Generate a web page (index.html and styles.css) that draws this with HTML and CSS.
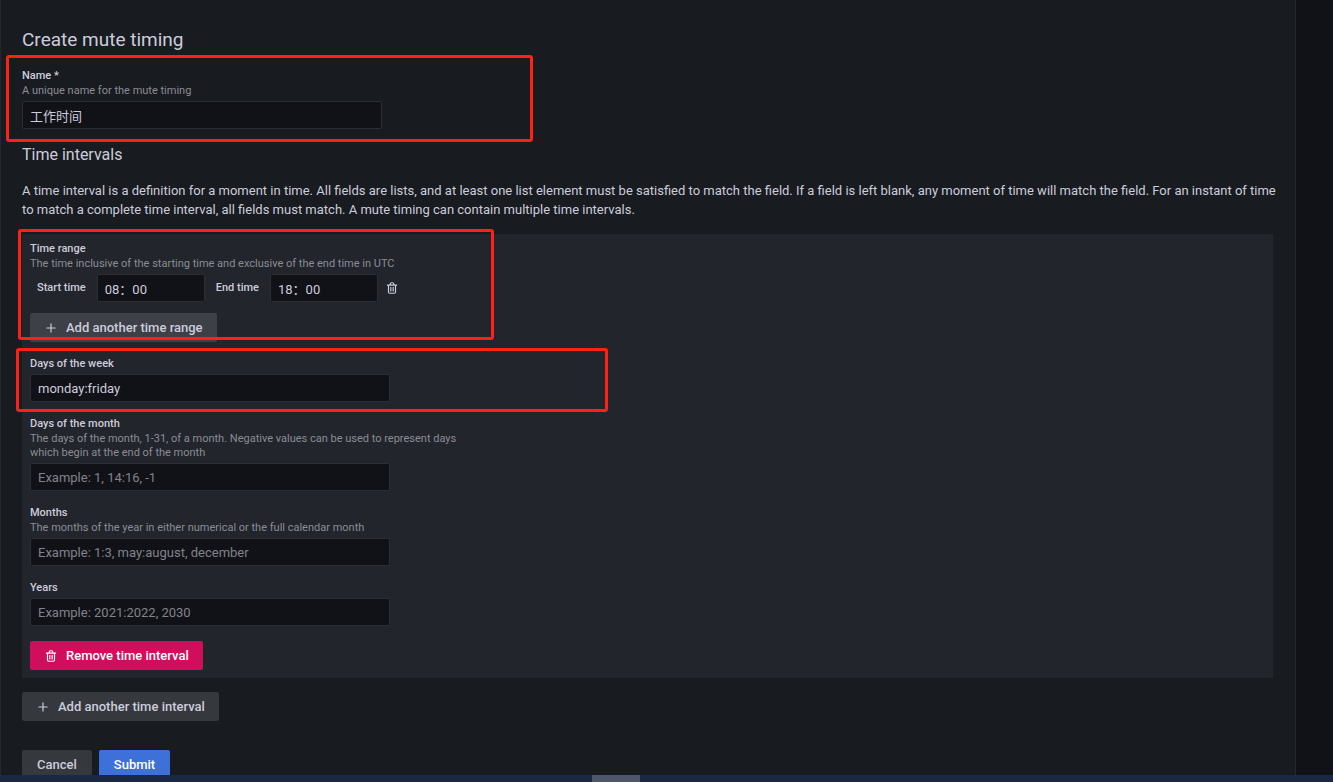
FILE: index.html
```html
<!DOCTYPE html>
<html lang="en">
<head>
  <meta charset="UTF-8" />
  <meta name="viewport" content="width=device-width, initial-scale=1.0"/>
  <title>Create mute timing</title>
  <link rel="stylesheet" href="styles.css">
</head>
<body>
  <svg class="sprite" aria-hidden="true">
    <symbol id="plus" viewBox="0 0 24 24">
      <path d="M19 11h-6V5a1 1 0 0 0-2 0v6H5a1 1 0 0 0 0 2h6v6a1 1 0 0 0 2 0v-6h6a1 1 0 0 0 0-2z"/>
    </symbol>
    <symbol id="trash" viewBox="0 0 24 24">
      <path d="M10 18a1 1 0 0 0 1-1v-6a1 1 0 0 0-2 0v6a1 1 0 0 0 1 1zM20 6h-4V5a3 3 0 0 0-3-3h-2a3 3 0 0 0-3 3v1H4a1 1 0 0 0 0 2h1v11a3 3 0 0 0 3 3h8a3 3 0 0 0 3-3V8h1a1 1 0 0 0 0-2zM10 5a1 1 0 0 1 1-1h2a1 1 0 0 1 1 1v1h-4zm7 14a1 1 0 0 1-1 1H8a1 1 0 0 1-1-1V8h10zm-3-1a1 1 0 0 0 1-1v-6a1 1 0 0 0-2 0v6a1 1 0 0 0 1 1z"/>
    </symbol>
  </svg>

  <main class="panel">
    <form>
      <h1>Create mute timing</h1>

      <div class="field marked mark-name">
        <label for="name">Name *</label>
        <p class="hint">A unique name for the mute timing</p>
        <input type="text" id="name" value="工作时间">
      </div>

      <h2>Time intervals</h2>
      <p class="intro">A time interval is a definition for a moment in time. All fields are lists, and at least one list element must be satisfied to match the field. If a field is left blank, any moment of time will match the field. For an instant of time to match a complete time interval, all fields must match. A mute timing can contain multiple time intervals.</p>

      <section class="interval">
        <div class="field marked mark-range">
          <h3>Time range</h3>
          <p class="hint">The time inclusive of the starting time and exclusive of the end time in UTC</p>
          <div class="time-row">
            <label for="start">Start time</label>
            <input type="text" id="start" value="08：00">
            <label for="end">End time</label>
            <input type="text" id="end" value="18：00">
            <button type="button" class="icon-button" aria-label="Remove time range">
              <svg><use href="#trash"/></svg>
            </button>
          </div>
          <button type="button" class="button secondary">
            <svg><use href="#plus"/></svg>Add another time range
          </button>
        </div>

        <div class="field marked mark-week">
          <label for="weekdays">Days of the week</label>
          <input type="text" id="weekdays" value="monday:friday">
        </div>

        <div class="field">
          <label for="days">Days of the month</label>
          <p class="hint">The days of the month, 1-31, of a month. Negative values can be used to represent days which begin at the end of the month</p>
          <input type="text" id="days" placeholder="Example: 1, 14:16, -1">
        </div>

        <div class="field">
          <label for="months">Months</label>
          <p class="hint">The months of the year in either numerical or the full calendar month</p>
          <input type="text" id="months" placeholder="Example: 1:3, may:august, december">
        </div>

        <div class="field">
          <label for="years">Years</label>
          <input type="text" id="years" placeholder="Example: 2021:2022, 2030">
        </div>

        <button type="button" class="button danger">
          <svg><use href="#trash"/></svg>Remove time interval
        </button>
      </section>

      <button type="button" class="button secondary">
        <svg><use href="#plus"/></svg>Add another time interval
      </button>

      <div class="actions">
        <button type="button" class="button secondary">Cancel</button>
        <button type="submit" class="button primary">Submit</button>
      </div>
    </form>
  </main>

  <div class="taskbar"><span></span></div>
</body>
</html>
```

FILE: styles.css
```css
*,
*::after {
  box-sizing: border-box;
}

body {
  margin: 0;
  height: 100vh;
  overflow: hidden;
  background: #111217;
  color: #ccccdc;
  font-family: Roboto, "Noto Sans CJK SC", sans-serif;
  font-size: 13px;
  line-height: 19px;
}

h1, h2, h3, p {
  margin: 0;
}

.sprite {
  display: none;
}

.panel {
  min-height: 100vh;
  margin-right: 37px;
  padding: 28px 22px 0 21px;
  background: #181b1f;
  border: solid #25272c;
  border-width: 0 1px;
}

h1 {
  margin-bottom: 17px;
  font-size: 19px;
  font-weight: 400;
  line-height: 24px;
}

h2 {
  margin: 16px 0;
  font-size: 16px;
  font-weight: 400;
  line-height: 20px;
}

.intro {
  margin: 0 -8px 15px 0;
}

.field {
  position: relative;
  display: flex;
  flex-direction: column;
  align-items: flex-start;
}

.field label,
h3 {
  font-size: 11px;
  font-weight: 500;
  line-height: 14px;
}

.hint {
  max-width: 440px;
  margin-top: 1px;
  color: #8b8c96;
  font-size: 11px;
  line-height: 14px;
}

input {
  width: 360px;
  height: 28px;
  margin-top: 3px;
  padding: 0 7px;
  background: #111217;
  border: 1px solid #2c2e33;
  border-radius: 2px;
  color: #ccccdc;
  font: inherit;
}

input::placeholder {
  color: #81828c;
  opacity: 1;
}

.interval {
  display: flex;
  flex-direction: column;
  align-items: flex-start;
  gap: 15px;
  margin-bottom: 14px;
  padding: 8px;
  background: #22252b;
}

.time-row {
  display: flex;
  align-items: center;
  margin: 3px 0 11px 7px;
}

.time-row input {
  width: 108px;
  margin: 0 11px;
}

.icon-button {
  display: flex;
  margin-left: -4px;
  padding: 0;
  background: none;
  border: 0;
  color: inherit;
}

svg {
  width: 14px;
  height: 14px;
  fill: currentColor;
}

.button {
  display: inline-flex;
  align-items: center;
  gap: 8px;
  height: 29px;
  padding: 0 14px;
  border: 0;
  border-radius: 2px;
  font: inherit;
  font-weight: 500;
  cursor: pointer;
}

.secondary {
  background: #35383d;
  color: #ccccdc;
}

.interval .secondary {
  background: #3d4047;
}

.danger {
  background: #d10e5c;
  color: #fff;
}

.primary {
  background: #3d71d9;
  color: #fff;
}

.actions {
  display: flex;
  gap: 7px;
  margin-top: 29px;
}

.actions .button {
  padding: 0 15px;
}

/* highlight frames over the fields */
.marked::after {
  content: "";
  position: absolute;
  border: 3px solid #ff2016;
  border-radius: 3px;
  pointer-events: none;
}

.mark-name::after {
  top: -14px;
  left: -16px;
  width: 527px;
  height: 87px;
}

.mark-range::after {
  top: -13px;
  left: -12px;
  width: 476px;
  height: 111px;
}

.mark-week::after {
  top: -9px;
  left: -14px;
  width: 592px;
  height: 64px;
}

.taskbar {
  position: fixed;
  right: 0;
  bottom: 0;
  left: 0;
  display: flex;
  justify-content: center;
  height: 7px;
  background: #1b2845;
}

.taskbar span {
  width: 48px;
  margin-right: 101px;
  background: #4d566c;
}
```
